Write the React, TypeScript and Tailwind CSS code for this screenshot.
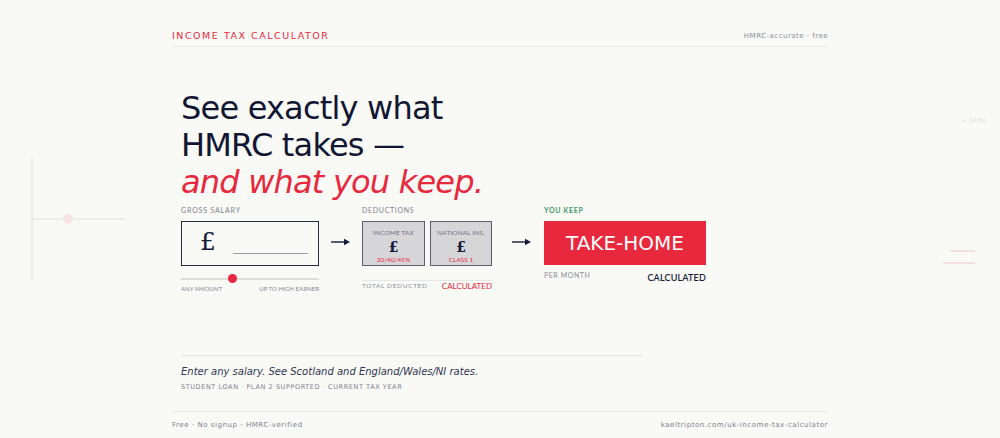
import React from 'react';

const sans = "font-['DejaVu_Sans',sans-serif]";
const lato = "font-['Lato','DejaVu_Sans',sans-serif]";

const Arrow: React.FC<{ className?: string }> = ({ className }) => (
    <svg className={className} width="19" height="8" viewBox="0 0 19 8" fill="none">
        <line x1="0" y1="4" x2="15" y2="4" stroke="#141a3a" strokeWidth="1.4" />
        <path d="M13 0.8 L19 4 L13 7.2 Z" fill="#141a3a" />
    </svg>
);

const DeductionBox: React.FC<{ label: string; note: string; width: string }> = ({ label, note, width }) => (
    <div className={`${width} h-[45px] bg-[#d6d6d9] border-[1.5px] border-[#5c5f6d] flex flex-col items-center pt-[6px]`}>
        <span className={`${lato} text-[6.5px] leading-[9px] text-[#6d707b] tracking-[0.02em]`}>{label}</span>
        <span className="font-['DejaVu_Serif',serif] text-[14px] leading-[16px] text-[#141a3a] font-bold mt-[2px]">£</span>
        <span className={`${lato} text-[6.5px] leading-[8px] text-[#e8283c] mt-[1px]`}>{note}</span>
    </div>
);

export default function App() {
    return (
        <div className={`relative min-h-screen overflow-hidden bg-[#f9f9f6] ${sans}`}>
            {/* faint decorations */}
            <div className="absolute left-[31px] top-[157px] w-[2px] h-[124px] bg-[#ecece9]" />
            <div className="absolute left-[33px] top-[218px] w-[92px] h-[2px] bg-[#ecece9]" />
            <div className="absolute left-[63px] top-[214px] w-[10px] h-[10px] rounded-full bg-[#f7e3e4]" />
            <div className="absolute left-[961px] top-[117px] text-[6.5px] font-bold text-[#ebebe6] tracking-[0.03em]">= SUM</div>
            <div className="absolute left-[950px] top-[250px] w-[25px] h-[1.5px] bg-[#f5e0df]" />
            <div className="absolute left-[943px] top-[262px] w-[32px] h-[1.5px] bg-[#f5e0df]" />

            <div className="relative mx-auto w-[656px]">
                <header className="pt-[30px] pb-[4px] flex justify-between items-end border-b border-[#e7e7e3]">
                    <span className="text-[9.5px] leading-[12px] tracking-[0.16em] text-[#e8283c]">INCOME TAX CALCULATOR</span>
                    <span className="text-[7px] leading-[12px] tracking-[0.07em] text-[#8a8d98]">HMRC-accurate · free</span>
                </header>

                <main className="pl-[9px]">
                    <h1 className="mt-[43px] text-[32px] leading-[36.8px] tracking-[-0.025em] text-[#111733]">
                        See exactly what
                        <br />
                        HMRC takes —
                        <br />
                        <em className="text-[#e8283c]">and what you keep.</em>
                    </h1>

                    <div className="mt-[5px] flex items-start">
                        <div className="w-[138px]">
                            <div className={`${lato} text-[7px] leading-[10px] tracking-[0.12em] text-[#7d818d]`}>GROSS SALARY</div>
                            <div className="mt-[6px] h-[45px] border-[1.5px] border-[#272c44] flex items-end pb-[9px]">
                                <span className="font-['DejaVu_Serif',serif] text-[25px] leading-[28px] text-[#141a3a] ml-[18px]">£</span>
                                <div className="ml-[17px] mb-[2px] w-[75px] h-[1px] bg-[#9a9ca4]" />
                            </div>
                            <div className="relative mt-[8px] h-[9px] flex items-center">
                                <div className="w-full h-[1.5px] bg-[#dcdcd8]" />
                                <div className="absolute left-[47px] top-0 w-[9px] h-[9px] rounded-full bg-[#e8283c]" />
                            </div>
                            <div className={`${lato} mt-[2px] flex justify-between text-[6px] leading-[8px] tracking-[0.01em] text-[#858893]`}>
                                <span>ANY AMOUNT</span>
                                <span>UP TO HIGH EARNER</span>
                            </div>
                        </div>

                        <Arrow className="mt-[33px] ml-[12px] mr-[12px]" />

                        <div className="w-[130px]">
                            <div className={`${lato} text-[7px] leading-[10px] tracking-[0.1em] text-[#7d818d]`}>DEDUCTIONS</div>
                            <div className="mt-[6px] flex gap-[5px]">
                                <DeductionBox label="INCOME TAX" note="20/40/45%" width="w-[63px]" />
                                <DeductionBox label="NATIONAL INS." note="CLASS 1" width="w-[62px]" />
                            </div>
                            <div className="mt-[14px] border-t border-[#e6e6e2] flex justify-between items-center">
                                <span className={`${lato} text-[6.5px] leading-[10px] tracking-[0.1em] text-[#8a8d98]`}>TOTAL DEDUCTED</span>
                                <span className={`${lato} text-[8px] leading-[10px] text-[#e8283c]`}>CALCULATED</span>
                            </div>
                        </div>

                        <Arrow className="mt-[33px] ml-[20px] mr-[13px]" />

                        <div className="w-[162px]">
                            <div className={`${lato} text-[7px] leading-[10px] tracking-[0.1em] text-[#3f9a6a] font-bold`}>YOU KEEP</div>
                            <div className="mt-[6px] h-[44px] bg-[#e8283c] flex items-center justify-center">
                                <span className="text-[20px] leading-[24px] text-white">TAKE-HOME</span>
                            </div>
                            <div className="mt-[4px] flex justify-between items-start">
                                <span className={`${lato} mt-[1px] text-[7px] leading-[10px] tracking-[0.08em] text-[#8a8d98]`}>PER MONTH</span>
                                <span className={`${lato} mt-[3px] text-[9px] leading-[12px] tracking-[0.02em] font-semibold text-[#141a3a]`}>CALCULATED</span>
                            </div>
                        </div>
                    </div>

                    <div className="mt-[62px] w-[462px] border-t border-[#e3e3df] pt-[8px]">
                        <p className="italic text-[10px] leading-[15px] text-[#2f3550]">
                            Enter any salary. See Scotland and England/Wales/NI rates.
                        </p>
                        <p className="mt-[3px] text-[6.5px] leading-[10px] tracking-[0.09em] text-[#7d818d]">
                            STUDENT LOAN · PLAN 2 SUPPORTED · CURRENT TAX YEAR
                        </p>
                    </div>
                </main>

                <footer className="mt-[19px] border-t border-[#e7e7e3] pt-[8px] flex justify-between">
                    <span className="text-[7px] leading-[10px] tracking-[0.08em] text-[#7d818d]">Free · No signup · HMRC-verified</span>
                    <span className="text-[7px] leading-[10px] tracking-[0.08em] text-[#7d818d]">kaeltripton.com/uk-income-tax-calculator</span>
                </footer>
            </div>
        </div>
    );
}
